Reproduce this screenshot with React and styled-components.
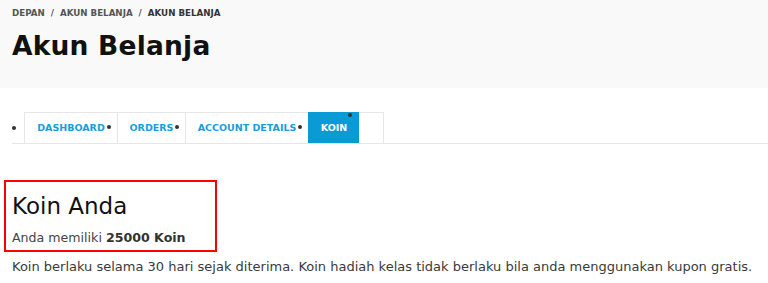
import React from "react";
import styled, { createGlobalStyle } from "styled-components";

const Global = createGlobalStyle`
  html, body { margin: 0; padding: 0; background: #fff; }
  body { font-family: "DejaVu Sans", sans-serif; color: #333; }
`;

const Header = styled.header`
  background: #f9f9f9;
  height: 88px;
  padding: 7px 12px 0;
  box-sizing: border-box;
`;

const Crumbs = styled.nav`
  display: flex;
  gap: 6px;
  font-size: 8.7px;
  font-weight: bold;
  text-transform: uppercase;
  color: #555;
  line-height: 12px;
`;

const Crumb = styled.span`
  color: ${(p) => (p.$current ? "#333" : "#555")};
`;

const Title = styled.h1`
  margin: 10px 0 0;
  font-size: 26.5px;
  font-weight: bold;
  color: #111;
  line-height: 34px;
  letter-spacing: 0.2px;
`;

const TabsBar = styled.div`
  margin: 24px 0 0 12px;
  display: flex;
  align-items: stretch;
  border-bottom: 1px solid #e6e6e6;
  height: 31px;
`;

const Dot = styled.span`
  width: 4px;
  height: 4px;
  border-radius: 50%;
  background: #333;
  align-self: center;
  margin: 0 8px 0 0;
`;

const TabList = styled.div`
  display: flex;
  border-top: 1px solid #e6e6e6;
  border-right: 1px solid #e6e6e6;
  width: 360px;
  box-sizing: border-box;
`;

const Tab = styled.div`
  position: relative;
  display: flex;
  align-items: center;
  justify-content: center;
  white-space: nowrap;
  width: ${(p) => p.$w}px;
  box-sizing: border-box;
  border-left: 1px solid ${(p) => (p.$active ? "#0a9bd6" : "#e6e6e6")};
  background: ${(p) => (p.$active ? "#0a9bd6" : "transparent")};
  color: ${(p) => (p.$active ? "#fff" : "#1a9dd9")};
  font-size: 9.5px;
  font-weight: bold;
  text-transform: uppercase;
  margin-top: -1px;
`;

const TabDot = styled.span`
  position: absolute;
  width: 4px;
  height: 4px;
  border-radius: 50%;
  background: #333;
  left: ${(p) => p.$x}px;
  top: ${(p) => p.$y}px;
`;

const Content = styled.section`
  padding: 36px 12px 0;
`;

const Highlight = styled.div`
  margin-left: -8px;
  width: 213px;
  height: 72px;
  box-sizing: border-box;
  border: 2px solid #f00;
  padding: 9px 0 0 6px;
`;

const Heading = styled.h2`
  margin: 0;
  font-weight: normal;
  font-size: 23px;
  line-height: 30px;
  color: #111;
`;

const Balance = styled.p`
  margin: 9px 0 0;
  font-size: 12.6px;
  line-height: 16px;
  color: #444;
  b { color: #333; }
`;

const Note = styled.p`
  margin: 7px 0 0;
  font-size: 13px;
  line-height: 16px;
  color: #3a3a3a;
`;

const tabs = [
  { label: "Dashboard", w: 93, dot: { x: 82, y: 13 } },
  { label: "Orders", w: 68, dot: { x: 57, y: 13 } },
  { label: "Account Details", w: 123, dot: { x: 112, y: 13 } },
  { label: "Koin", w: 51, active: true, dot: { x: 39, y: 1 } },
];

export default function App() {
  return (
    <>
      <Global />
      <Header>
        <Crumbs>
          <Crumb>Depan</Crumb>
          <span>/</span>
          <Crumb>Akun Belanja</Crumb>
          <span>/</span>
          <Crumb $current>Akun Belanja</Crumb>
        </Crumbs>
        <Title>Akun Belanja</Title>
      </Header>
      <TabsBar>
        <Dot />
        <TabList>
          {tabs.map((t) => (
            <Tab key={t.label} $w={t.w} $active={t.active}>
              {t.label}
              <TabDot $x={t.dot.x} $y={t.dot.y} />
            </Tab>
          ))}
        </TabList>
      </TabsBar>
      <Content>
        <Highlight>
          <Heading>Koin Anda</Heading>
          <Balance>
            Anda memiliki <b>25000 Koin</b>
          </Balance>
        </Highlight>
        <Note>
          Koin berlaku selama 30 hari sejak diterima. Koin hadiah kelas tidak berlaku bila anda menggunakan kupon gratis.
        </Note>
      </Content>
    </>
  );
}
